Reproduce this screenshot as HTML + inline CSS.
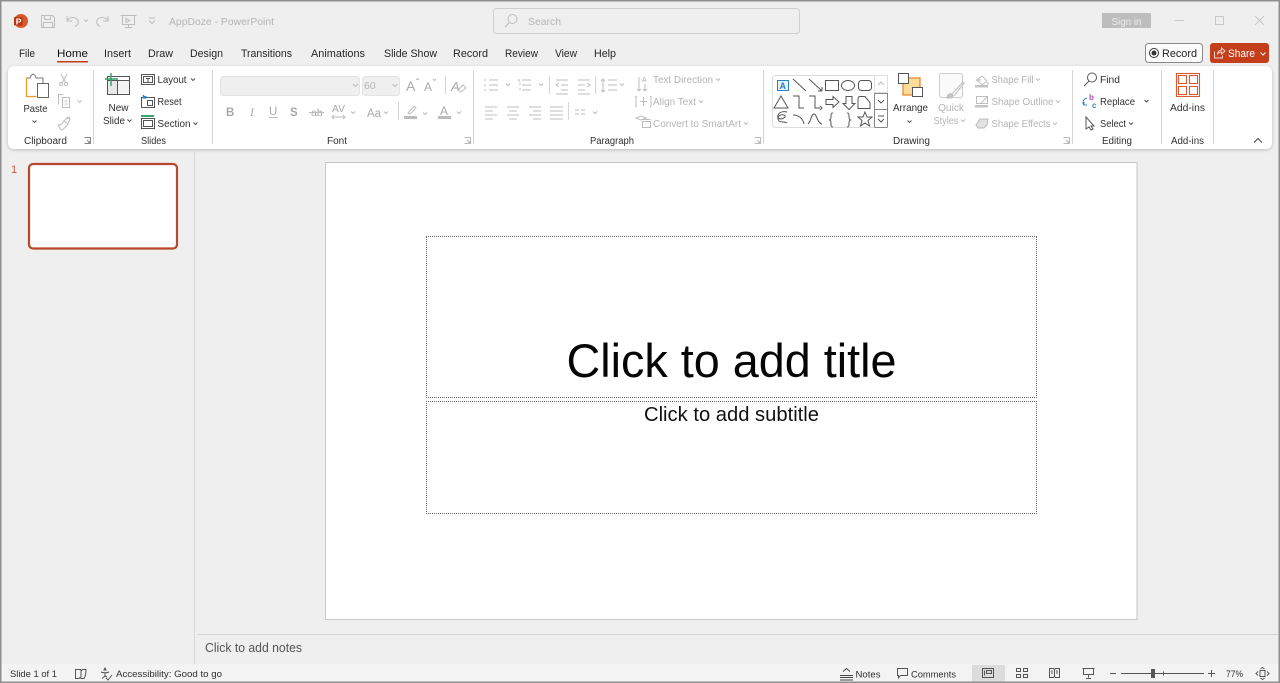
<!DOCTYPE html>
<html lang="en"><head><meta charset="utf-8"><title>AppDoze - PowerPoint</title>
<style>
html,body{margin:0;padding:0;background:#efefef;width:1280px;height:683px;overflow:hidden}
body{position:relative}
svg{display:block;font-family:"Liberation Sans",sans-serif}
text{font-size:10.5px;fill:#303030}
.g{fill:#b4b4b4}
.tab{font-size:11px;fill:#262626}
.i{fill:none;stroke:#666;stroke-width:1}
.d{fill:none;stroke:#bdbdbd;stroke-width:1}
.c{fill:none;stroke:#555;stroke-width:1}
.cg{fill:none;stroke:#bbb;stroke-width:1}
.soft{filter:blur(.3px)}
.ph{position:absolute;box-sizing:border-box;border:1px dotted #666}
</style></head><body>
<svg width="1280" height="683" viewBox="0 0 1280 683" xmlns="http://www.w3.org/2000/svg">
<defs><filter id="sh" x="-2%" y="-10%" width="104%" height="125%"><feDropShadow dx="0" dy="1" stdDeviation="1.5" flood-color="#000" flood-opacity=".22"/></filter></defs>
<rect width="1280" height="683" fill="#efefef"/>
<g class="soft">

<!-- title bar -->
<circle cx="21" cy="21" r="7" fill="#d8572c"/><rect x="14" y="17" width="8.500" height="8.500" rx="1" fill="#b7350f"/>
<text x="15.800" y="24.500" style="font-size:8.500px;font-weight:bold;fill:#fff">P</text>
<g class="d"><path d="M41.500 15.500h11l2 2v10h-13zM44.500 15.500v4h6v-4M43.500 27.500v-5h9v5"/>
<path d="M67 16v5h5M67 20.500c3-4 9-4 11 0 1 3-1 5-3 6"/>
<path d="M108 16v5h-5M108 20.500c-3-4-9-4-11 0-1 3 1 5 3 6"/>
<path d="M122.500 15.500h12v9h-12zM120.500 15.500h16M128.500 24.500v3M125 27.500h7M126 18.500l4 2-4 2z"/>
<path d="M84 19.500l2 2 2-2M149 20.500l3 3 3-3M149 18h6"/></g>
<text class="g" x="169" y="25" textLength="105" lengthAdjust="spacingAndGlyphs">AppDoze  -  PowerPoint</text>

<rect x="493.500" y="8.500" width="306" height="25" rx="3" fill="#efefef" stroke="#cfcfcf"/>
<circle cx="512.500" cy="19" r="4.500" class="d"/><path class="d" d="M509 23l-4 4"/>
<text class="g" x="528" y="25" textLength="33" lengthAdjust="spacingAndGlyphs">Search</text>

<rect x="1102" y="13" width="49" height="15" fill="#bdbdbd"/>
<text x="1111.500" y="25" textLength="30" lengthAdjust="spacingAndGlyphs" style="fill:#eee">Sign in</text>
<path fill="none" stroke="#c8c8c8" d="M1175 20.500h9M1215.500 16.500h8v8h-8zM1255 16l9 9M1264 16l-9 9"/>

<!-- tabs -->
<text class="tab" x="19" y="57" textLength="16" lengthAdjust="spacingAndGlyphs">File</text>
<text class="tab" x="57" y="57" textLength="31" lengthAdjust="spacingAndGlyphs" style="fill:#111">Home</text>
<text class="tab" x="104" y="57" textLength="27" lengthAdjust="spacingAndGlyphs">Insert</text>
<text class="tab" x="148" y="57" textLength="25" lengthAdjust="spacingAndGlyphs">Draw</text>
<text class="tab" x="190" y="57" textLength="33" lengthAdjust="spacingAndGlyphs">Design</text>
<text class="tab" x="241" y="57" textLength="51" lengthAdjust="spacingAndGlyphs">Transitions</text>
<text class="tab" x="311" y="57" textLength="54" lengthAdjust="spacingAndGlyphs">Animations</text>
<text class="tab" x="384" y="57" textLength="53" lengthAdjust="spacingAndGlyphs">Slide Show</text>
<text class="tab" x="453" y="57" textLength="35" lengthAdjust="spacingAndGlyphs">Record</text>
<text class="tab" x="505" y="57" textLength="33" lengthAdjust="spacingAndGlyphs">Review</text>
<text class="tab" x="555" y="57" textLength="22" lengthAdjust="spacingAndGlyphs">View</text>
<text class="tab" x="594" y="57" textLength="22" lengthAdjust="spacingAndGlyphs">Help</text>
<rect x="57" y="61" width="31" height="1.500" fill="#c43e1c"/>

<rect x="1145.500" y="43.500" width="57" height="19" rx="3" fill="#fbfbfb" stroke="#8a8a8a"/>
<circle cx="1154" cy="53" r="4.500" fill="none" stroke="#333"/><circle cx="1154" cy="53" r="2.500" fill="#333"/>
<text x="1162" y="57" textLength="35" lengthAdjust="spacingAndGlyphs" style="font-size:11px;fill:#222">Record</text>
<rect x="1210" y="43" width="59" height="20" rx="3" fill="#c43e1c"/>
<path fill="none" stroke="#f4d8cf" d="M1214.500 51.500v6.500h8v-2.500M1217.500 54.500c0-3 2-4.500 4-4.500v-2l3.500 3-3.500 3v-2c-2 0-3 .5-4 2.500z"/>
<text x="1228" y="57" textLength="27" lengthAdjust="spacingAndGlyphs" style="font-size:11px;fill:#fff">Share</text>
<path fill="none" stroke="#fff" d="M1260.500 52.500l2.500 2.500 2.500-2.500"/>

<!-- ribbon -->
<rect x="8" y="66" width="1264" height="83" rx="6" fill="#fff" filter="url(#sh)"/>
<g stroke="#d5d5d5"><path d="M93.500 70v74M212.500 70v74M473.500 70v74M763.500 70v74M1072.500 70v74M1161.500 70v74M1213.500 70v74"/></g>

<!-- clipboard -->
<path fill="none" stroke="#ed9a2c" stroke-width="1.300" d="M27 78h-.5v18.500h10"/>
<path fill="none" stroke="#777" d="M27 78h3l1-2.500 2-1.500 2 1.500 1 2.500h7v5"/>
<rect x="37.500" y="83.500" width="11" height="14" fill="#fff" stroke="#666"/>
<text x="23.500" y="112" textLength="24" lengthAdjust="spacingAndGlyphs">Paste</text>
<path class="c" d="M32.500 120.500l2 2 2-2"/>
<path class="d" d="M61 74l5 9M67 74l-5 9M58.500 104.500v-10h5M62.500 97.500h7v10h-7zM64.500 101h3M64.500 104h3"/>
<circle cx="61" cy="84" r="1.500" class="d"/><circle cx="66" cy="84" r="1.500" class="d"/>
<path class="d" d="M77.500 100.500l2 2 2-2"/>
<path class="d" d="M58 125c3 0 5-2 6-4l4 3c-2 3-4 5-7 6zM64 121l4-4 2 2-2 5M66 119l4-2"/>
<text x="24" y="144" textLength="43" lengthAdjust="spacingAndGlyphs" style="font-size:10px">Clipboard</text>
<path class="c" style="stroke:#888" d="M84.500 137.500h6v6h-6M87 140l3 3M90 141v2h-2"/>

<!-- slides -->
<path class="i" style="stroke:#555" d="M107.500 76.500h22v18h-22zM107.500 80.500h22M117.500 80.500v14"/>
<rect x="108" y="81" width="9" height="13" fill="#e8e8e8"/><rect x="118" y="81" width="11" height="13" fill="#f4f4f4"/>
<path stroke="#2f9e5e" stroke-width="1.400" d="M105 79h13M111 73v13" fill="none"/>
<text x="108.500" y="111" textLength="20" lengthAdjust="spacingAndGlyphs">New</text>
<text x="103" y="124" textLength="22" lengthAdjust="spacingAndGlyphs">Slide</text>
<path class="c" d="M127.500 119.500l2 2 2-2"/>
<path class="c" d="M141.500 74.500h13v10h-13zM143.500 76.500h9v6h-9zM146 78.500h4M148 78.500v4"/>
<text x="157.500" y="83" textLength="29" lengthAdjust="spacingAndGlyphs">Layout</text><path class="c" d="M191 78.500l2 2 2-2"/>
<path class="c" d="M141.500 97.500h13v10h-13zM147.500 100.500h5v5h-5z"/><path fill="none" stroke="#2c86c9" stroke-width="1.300" d="M143 98c1-2 3-2 4 0M143.500 95v3h3"/>
<text x="157.500" y="105" textLength="24" lengthAdjust="spacingAndGlyphs">Reset</text>
<path stroke="#3aa76a" stroke-width="2" d="M141 116h13" fill="none"/><path class="c" d="M141.500 118.500h13v10h-13zM143.500 120.500h9v6h-9z"/>
<text x="157.500" y="127" textLength="33" lengthAdjust="spacingAndGlyphs">Section</text><path class="c" d="M193.500 122.500l2 2 2-2"/>
<text x="141" y="144" textLength="25" lengthAdjust="spacingAndGlyphs" style="font-size:10px">Slides</text>

<!-- font -->
<rect x="220.500" y="76.500" width="139" height="19" rx="3" fill="#efefef" stroke="#e3e3e3"/>
<rect x="362.500" y="76.500" width="37" height="19" rx="3" fill="#efefef" stroke="#e3e3e3"/>
<text class="g" x="364" y="89">60</text>
<path class="d" d="M353 84l2.500 2.500 2.500-2.500M392.500 84l2.500 2.500 2.500-2.500"/>
<text x="406" y="91" style="font-size:14px;fill:#a8a8a8">A</text><path class="d" d="M416 80l1.500-1.500 1.500 1.500M433 79l1.500 1.500 1.500-1.500"/>
<text x="424" y="91" style="font-size:12px;fill:#a8a8a8">A</text>
<path stroke="#d5d5d5" d="M445.500 76v18M398.500 102v18" fill="none"/>
<text x="451" y="91" style="font-size:13px;fill:#a8a8a8;font-style:italic">A</text><path class="d" d="M458 90l5-5 3 3-5 4z"/>
<text x="226" y="116" style="font-size:11.500px;font-weight:bold;fill:#a8a8a8">B</text>
<text x="250" y="116" style="font-size:11.500px;font-family:'Liberation Serif',serif;font-style:italic;fill:#a8a8a8">I</text>
<text x="269" y="115" style="font-size:11.500px;fill:#a8a8a8">U</text><path class="d" d="M269 117.500h9"/>
<text x="290" y="116" style="font-size:11.500px;font-weight:bold;fill:#a8a8a8">S</text>
<text x="311" y="116" style="font-size:10.500px;fill:#a8a8a8">ab</text><path class="d" d="M309 112.500h15"/>
<text x="332" y="112" textLength="13" lengthAdjust="spacingAndGlyphs" style="font-size:10.500px;fill:#a8a8a8">AV</text><path class="d" d="M332 117h13M334 115l-2 2 2 2M343 115l2 2-2 2M351 111.500l2 2 2-2"/>
<text x="367" y="117" textLength="14" lengthAdjust="spacingAndGlyphs" style="font-size:11.500px;fill:#a8a8a8">Aa</text><path class="d" d="M384 111.500l2 2 2-2"/>
<rect x="404" y="116" width="13" height="3" fill="#bcbcbc"/><path class="d" d="M408 113l6-7 2 2-6 6zM423 112.500l2 2 2-2"/>
<text x="440" y="115" style="font-size:12px;fill:#a8a8a8">A</text><rect x="438" y="116" width="13" height="3" fill="#bcbcbc"/><path class="d" d="M457 111.500l2 2 2-2"/>
<text x="327" y="144" textLength="20" lengthAdjust="spacingAndGlyphs" style="font-size:10px">Font</text>
<path class="cg" d="M464.500 137.500h6v6h-6M467 140l3 3M470 141v2h-2"/>

<!-- paragraph -->
<g class="d">
<path d="M484 80h2M484 85h2M484 90h2M489 80h9M489 85h9M489 90h9M506 83.500l2 2 2-2"/>
<path d="M519 79v3M519 84h2M519 89h2M522 80h9M522 85h9M522 90h9M539 83.500l2 2 2-2"/>
<path d="M556 80h12M561 85h7M561 90h7M556 94h12M559 83l-3 2 3 2"/>
<path d="M578 80h12M578 85h7M578 90h7M578 94h12M587 83l3 2-3 2"/>
<path d="M603 79l-2 2M603 79l2 2M603 79v13M603 92l-2-2M603 92l2-2M608 80h9M608 85h9M608 90h9M620 83.500l2 2 2-2"/>
<path d="M485 107h12M485 111h8M485 115h12M485 119h8M507 107h12M509 111h8M507 115h12M509 119h8M529 107h12M533 111h8M529 115h12M533 119h8M550 107h13M550 111h13M550 115h13M550 119h13"/>
<path d="M575 110h4M581 110h4M575 114h4M581 114h4M593 111.500l2 2 2-2"/>
<path d="M639 77v14M639 91l-2-2M639 91l2-2M645 84v7M645 91l-2-2M645 91l2-2"/>
<path d="M637 96.500h-1v10h1M650 96.500h1v10h-1M640 101.500h7M643.500 97v9"/>
<path d="M636 118l5-2 5 2-5 2zM642.500 121.500h8v6h-8zM642.500 119.500h8"/>
</g>
<path stroke="#d5d5d5" d="M549.500 76v18M595.500 76v18M568.500 102v18" fill="none"/>
<text x="642" y="82" style="font-size:7px;fill:#aaa">A</text>
<text class="g" x="653" y="83" textLength="60" lengthAdjust="spacingAndGlyphs">Text Direction</text><path class="d" d="M716 78.500l2 2 2-2"/>
<text class="g" x="653" y="105" textLength="43" lengthAdjust="spacingAndGlyphs">Align Text</text><path class="d" d="M699 100.500l2 2 2-2"/>
<text class="g" x="653" y="127" textLength="88" lengthAdjust="spacingAndGlyphs">Convert to SmartArt</text><path class="d" d="M744 122.500l2 2 2-2"/>
<text x="590" y="144" textLength="44" lengthAdjust="spacingAndGlyphs" style="font-size:10px">Paragraph</text>
<path class="cg" d="M754.500 137.500h6v6h-6M757 140l3 3M760 141v2h-2"/>

<!-- drawing gallery -->
<rect x="772.500" y="75.500" width="115" height="52" rx="3" fill="#fff" stroke="#dcdcdc"/>
<rect x="777.500" y="80.500" width="11" height="10" fill="#e9f3fb" stroke="#2a80c4"/>
<text x="779.500" y="89" style="font-size:9px;font-weight:bold;fill:#2a80c4">A</text>
<g class="i" style="stroke:#555">
<path d="M793 79l13 12M809 79l13 12M822 91v-4M822 91h-4"/>
<rect x="825.500" y="80.500" width="13" height="10"/><ellipse cx="848" cy="85.500" rx="6.500" ry="5"/><rect x="858.500" y="80.500" width="13" height="10" rx="3"/>
<path d="M781 96l-7 12h14zM793 96h6v12h5M809 96h6v12h5M820 106l2 2-2 2M826 99.500h7v-3l6 5.500-6 5.500v-3h-7zM846 96.500h6v7h3l-6 6-6-6h3zM860 96.500h5l5 6v6h-12v-8c0-2 0-4 2-4z"/>
<path d="M787 112c-8-2-12 5-7 7 4 0 7-3 4-4-4-1-8 2-5 6 3 2 5 0 8 2M793 115c5 0 10 3 11 9M808 124c3-2 3-10 6-10 3 0 3 9 8 10"/>
<path d="M833 113c-2 0-2 1-2 4 0 2-1 3-2 3 1 0 2 1 2 3 0 3 0 4 2 4M847 113c2 0 2 1 2 4 0 2 1 3 2 3-1 0-2 1-2 3 0 3 0 4-2 4M865 112l2 5h5l-4 3.500 1.500 5.500-4.500-3-4.500 3 1.500-5.500-4-3.500h5z"/>
</g>
<rect x="874.500" y="75.500" width="13" height="17" fill="#fff" stroke="#e0e0e0"/>
<rect x="874.500" y="93.500" width="13" height="16" fill="#fff" stroke="#888"/>
<rect x="874.500" y="109.500" width="13" height="18" rx="1" fill="#fff" stroke="#888"/>
<path class="d" d="M878 85l3-3 3 3"/><path class="c" d="M878 100l3 3 3-3M878 116h6M878 119l3 3 3-3"/>
<rect x="903" y="78" width="17" height="17" fill="#fbdc99" stroke="#e8831f" stroke-width="1.200"/>
<rect x="898.500" y="73.500" width="10" height="10" fill="#fff" stroke="#555"/>
<rect x="912.500" y="87.500" width="10" height="9" fill="#fff" stroke="#555"/>
<text x="893" y="111" textLength="35" lengthAdjust="spacingAndGlyphs">Arrange</text>
<path class="c" d="M907.500 120.500l2 2 2-2"/>
<rect x="939.500" y="73.500" width="23" height="24" rx="2" fill="#fafafa" stroke="#cdcdcd"/>
<path fill="#c8c8c8" stroke="#bbb" d="M947 97c1-3 3-4 5-3l1 2-2 2h-4z"/><path class="d" d="M952 94l11-12 1 1-10 13"/>
<text class="g" x="938" y="111" textLength="26" lengthAdjust="spacingAndGlyphs">Quick</text>
<text class="g" x="933.500" y="124" textLength="25" lengthAdjust="spacingAndGlyphs">Styles</text><path class="d" d="M961 119.500l2 2 2-2"/>
<path class="d" d="M977 80l5-4 5 5-5 4zM988 82v3M976 80h5"/><rect x="975" y="85" width="13" height="2.500" fill="#c4c4c4"/>
<text class="g" x="991.500" y="83" textLength="42" lengthAdjust="spacingAndGlyphs">Shape Fill</text><path class="d" d="M1036 78.500l2 2 2-2"/>
<path class="d" d="M976.500 96.500h11v7h-11zM981 103l7-7"/><rect x="975" y="105" width="13" height="2.500" fill="#c4c4c4"/>
<text class="g" x="991.500" y="105" textLength="62" lengthAdjust="spacingAndGlyphs">Shape Outline</text><path class="d" d="M1056 100.500l2 2 2-2"/>
<path fill="#e2e2e2" stroke="#bbb" d="M976 125l4-6h8l-1 6-3 3h-6z"/>
<text class="g" x="991.500" y="127" textLength="59" lengthAdjust="spacingAndGlyphs">Shape Effects</text><path class="d" d="M1053 122.500l2 2 2-2"/>
<text x="893" y="144" textLength="37" lengthAdjust="spacingAndGlyphs" style="font-size:10px">Drawing</text>
<path class="cg" d="M1063.500 137.500h6v6h-6M1066 140l3 3M1069 141v2h-2"/>

<!-- editing -->
<circle cx="1092" cy="77.500" r="4.500" class="c"/><path class="c" d="M1089 81l-5 5"/>
<text x="1100" y="83" textLength="20" lengthAdjust="spacingAndGlyphs">Find</text>
<text x="1089" y="100" style="font-size:8px;font-weight:bold;fill:#b04fc0">b</text>
<text x="1092" y="108" style="font-size:8px;font-weight:bold;fill:#2f86cc">c</text>
<path fill="none" stroke="#2f86cc" d="M1087 98c-4 1-5 5-3 7h3M1084 102v3"/>
<text x="1100" y="105" textLength="35" lengthAdjust="spacingAndGlyphs">Replace</text><path class="c" d="M1144.500 100l2 2 2-2"/>
<path class="c" d="M1086 117v12l3-2 2 3 2-1-2-3h3z"/>
<text x="1100" y="127" textLength="26" lengthAdjust="spacingAndGlyphs">Select</text><path class="c" d="M1129 122.500l2 2 2-2"/>
<text x="1102" y="144" textLength="30" lengthAdjust="spacingAndGlyphs" style="font-size:10px">Editing</text>

<!-- add-ins -->
<g fill="none" stroke="#dc5a2e" stroke-width="1.100"><rect x="1176.500" y="73.500" width="23" height="23"/><rect x="1178.500" y="75.500" width="8" height="8"/><rect x="1189.500" y="75.500" width="8" height="8"/><rect x="1178.500" y="86.500" width="8" height="8"/><rect x="1189.500" y="86.500" width="8" height="8"/></g>
<text x="1170" y="111" textLength="35" lengthAdjust="spacingAndGlyphs">Add-ins</text>
<text x="1171" y="144" textLength="33" lengthAdjust="spacingAndGlyphs" style="font-size:10px">Add-ins</text>
<path fill="none" stroke="#444" d="M1254 142.500l4-4 4 4"/>

<!-- workspace -->
<path stroke="#d6d6d6" d="M194.500 150v514" fill="none"/>
<text x="11" y="173" style="font-size:11px;fill:#d0583a">1</text>
<rect x="29" y="164" width="148" height="84.500" rx="4" fill="#fff" stroke="#b9472a" stroke-width="2.200"/>
<rect x="325.500" y="162.500" width="811.500" height="457" fill="#fff" stroke="#c6c6c6"/>
<text x="566.500" y="377" textLength="330" lengthAdjust="spacingAndGlyphs" style="font-size:47px;fill:#050505">Click to add title</text>
<text x="644" y="421" textLength="175" lengthAdjust="spacingAndGlyphs" style="font-size:20px;fill:#111">Click to add subtitle</text>

<path stroke="#d6d6d6" d="M197 634.500h1083" fill="none"/>
<text x="205" y="652" textLength="97" lengthAdjust="spacingAndGlyphs" style="font-size:12.500px;fill:#555">Click to add notes</text>

<!-- status -->
<rect x="2" y="664" width="1276" height="18" fill="#f3f3f3"/>
<text x="10" y="677" textLength="47" lengthAdjust="spacingAndGlyphs" style="font-size:9.500px">Slide 1 of 1</text>
<path class="c" d="M75.500 669.500h5l1 1 1-1h3.500c0 3 0 6-2 9h-3l-1-1-1 1h-3.500zM81 670.500v7"/>
<path class="c" d="M105 668l1 2h-2zM101 672c2 1 6 1 8 0M105 673v3l-3 2.500M105 676l2 1M106 678l2 2 4-5"/>
<text x="116" y="677" textLength="106" lengthAdjust="spacingAndGlyphs" style="font-size:9.500px">Accessibility: Good to go</text>
<path class="c" d="M840 675.500h13M840 677.500h13M840 680h13M843 671.500l3.500-3 3.500 3" style="stroke:#444"/>
<text x="855.500" y="677.500" textLength="25" lengthAdjust="spacingAndGlyphs" style="font-size:9.500px">Notes</text>
<path class="c" d="M897.500 668.500h10v7h-7l-2 2.500v-2.500h-1z"/>
<text x="911" y="677.500" textLength="45" lengthAdjust="spacingAndGlyphs" style="font-size:9.500px">Comments</text>
<rect x="972" y="665" width="33" height="17" fill="#dcdcdc"/>
<path class="c" d="M982.500 668.500h11v9h-11zM984.500 670.500v5M986.500 670.500h5v3h-5z"/>
<path class="c" d="M1016.500 668.500h4v3h-4zM1023.500 668.500h4v3h-4zM1016.500 674.500h4v3h-4zM1023.500 674.500h4v3h-4zM1049.500 668.500h4l1 1 1-1h4v9h-4l-1-1-1 1h-4zM1054.500 669.500v7M1051 671h2M1051 673h2M1056 671h2M1056 673h2"/>
<path class="c" d="M1083.500 668.500h10v6h-10zM1082.500 668.500h12M1088.500 674.500v3M1086 678.500h5"/>
<path stroke="#555" fill="none" d="M1110 673.500h6M1121 673.500h83M1163.500 671.500v4M1208 673.500h7M1211.500 670v7"/>
<rect x="1151" y="669" width="4" height="9" fill="#555"/>
<text x="1226" y="677" textLength="17" lengthAdjust="spacingAndGlyphs" style="font-size:9.500px">77%</text>
<path class="c" d="M1260 670.500h5v6h-5zM1260.500 669l2-1.500 2 1.500M1260.500 678l2 1.500 2-1.500M1258 671.500l-2 2 2 2M1267 671.500l2 2-2 2"/>
</g>

<!-- window border -->
<rect x=".75" y=".75" width="1278.500" height="681.500" fill="none" stroke="#8f8f8f" stroke-width="1.500"/>
</svg>
<div class="ph" style="left:426px;top:236px;width:611px;height:162px"></div>
<div class="ph" style="left:426px;top:401px;width:611px;height:113px"></div>
</body></html>
